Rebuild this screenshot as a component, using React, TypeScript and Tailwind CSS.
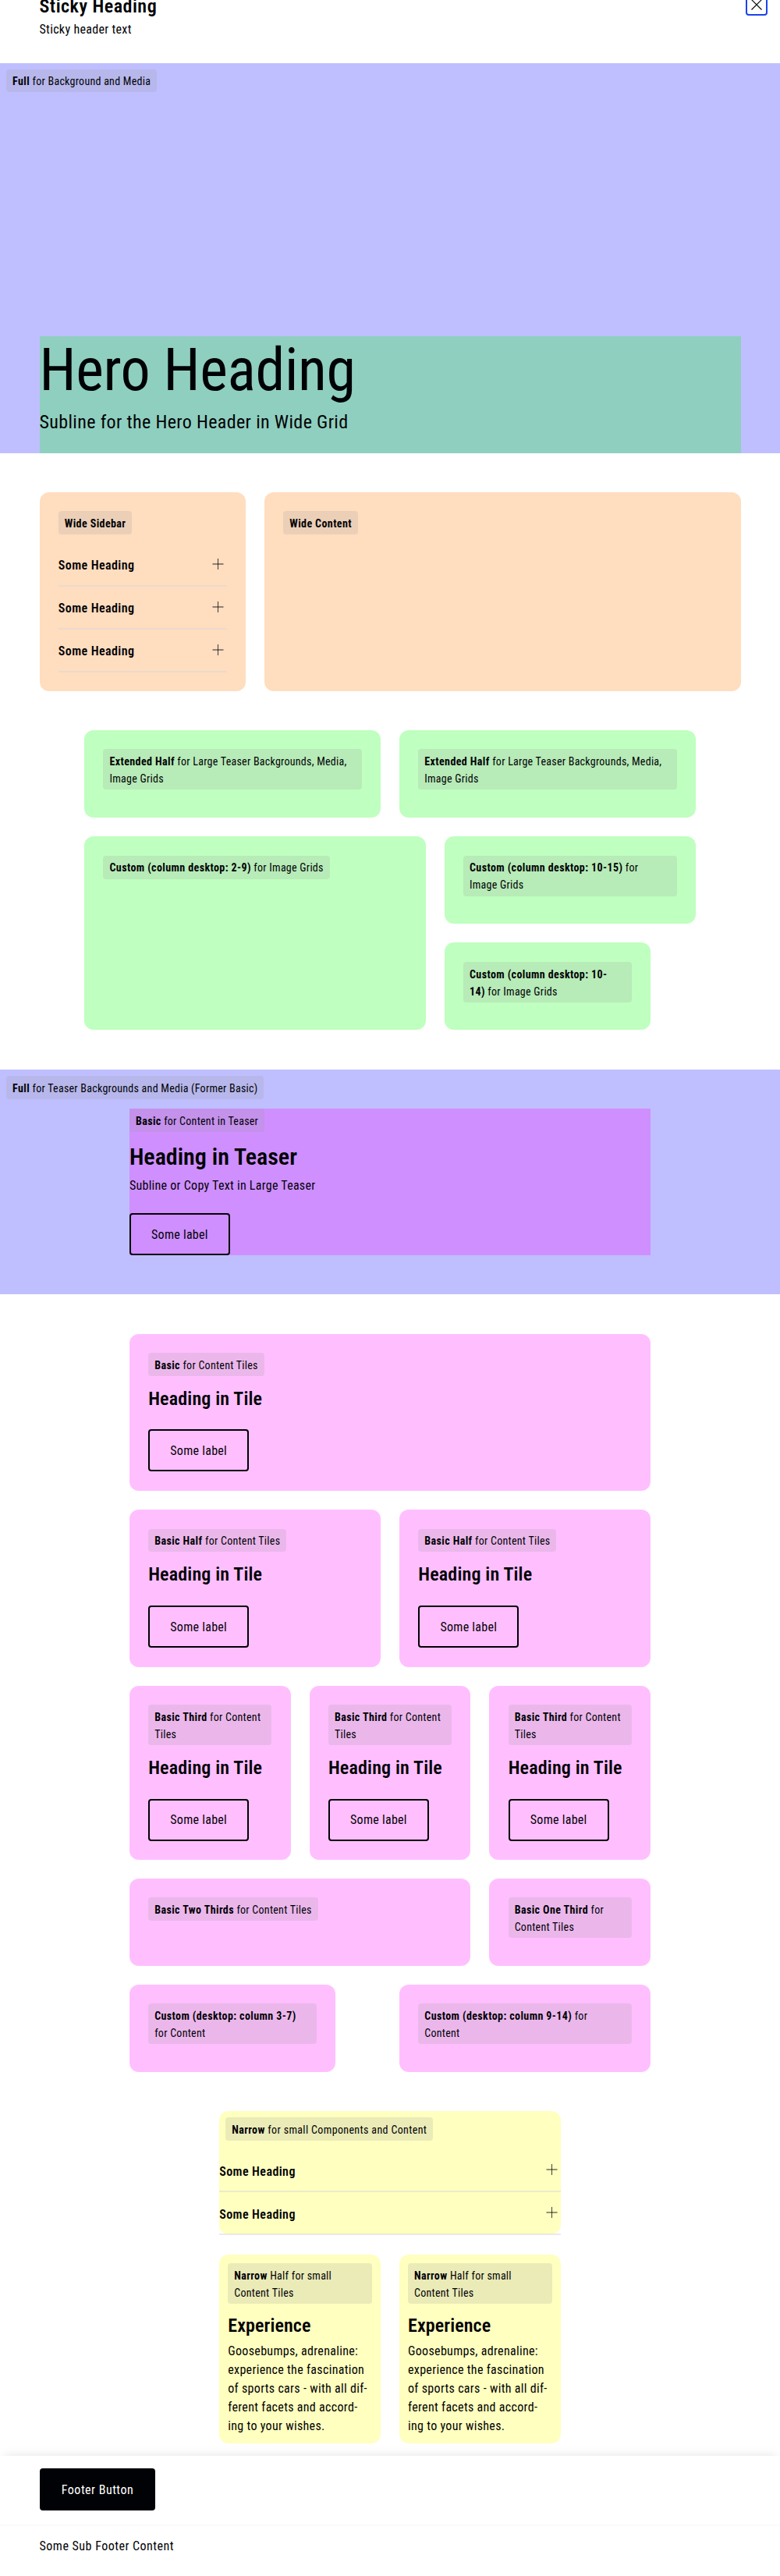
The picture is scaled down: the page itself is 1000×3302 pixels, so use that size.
import type { ReactNode } from 'react';

const GRID = 'grid grid-cols-[repeat(16,minmax(0,1fr))] gap-x-6 gap-y-[24.4px] px-[50.5px]';

function Label({ name, children, block }: { name: ReactNode; children?: ReactNode; block?: boolean }) {
  return (
    <div
      className={`${block ? 'block' : 'w-fit'} rounded-[4px] bg-[#9b9b9b]/20 px-2 pt-[4.9px] pb-[3.1px] text-sm leading-[22px] tracking-[0.26px] whitespace-nowrap`}
    >
      <b className="font-bold tracking-[0.4px]">{name}</b>
      {children}
    </div>
  );
}

function Button({ children }: { children: ReactNode }) {
  return (
    <button className="flex h-[53.7px] w-[129px] items-center justify-center rounded-[4px] border-2 border-[#010205] pt-[1.5px] text-base leading-6 tracking-[0.28px]">
      {children}
    </button>
  );
}

function AccordionItem() {
  return (
    <div className="flex h-[55px] items-start justify-between border-b-2 border-[#d8d8db]/50">
      <h3 className="mt-[16.3px] text-base leading-6 font-semibold tracking-[0.42px]">Some Heading</h3>
      <svg className="mt-3.5 size-6" viewBox="0 0 24 24" fill="none" stroke="#010205">
        <path d="M12.5 5v14" strokeOpacity="0.75" />
        <path d="M5.5 12h14" strokeOpacity="0.85" />
      </svg>
    </div>
  );
}

function Tile({ className, children }: { className: string; children: ReactNode }) {
  return <div className={`rounded-xl p-[24.3px] ${className}`}>{children}</div>;
}

function ContentTile({ className, label }: { className: string; label: ReactNode }) {
  return (
    <Tile className={`bg-[#ffbfff] ${className}`}>
      {label}
      <h2 className="mt-[10.9px] mb-[21.8px] text-2xl leading-9 font-semibold tracking-[0.17px] whitespace-nowrap">
        Heading in Tile
      </h2>
      <Button>Some label</Button>
    </Tile>
  );
}

function ExperienceTile({ className }: { className: string }) {
  return (
    <div className={`h-[242.5px] rounded-xl bg-[#ffffbf] p-[11px] ${className}`}>
      <Label name="Narrow" block>
        {' '}Half for small
        <br />
        Content Tiles
      </Label>
      <h2 className="mt-[10px] text-2xl leading-9 font-semibold tracking-[0.1px]">Experience</h2>
      <p className="mt-[3.5px] text-base leading-6 tracking-[0.32px] whitespace-nowrap">
        Goosebumps, adrenaline:
        <br />
        experience the fascination
        <br />
        of sports cars - with all dif-
        <br />
        ferent facets and accord-
        <br />
        ing to your wishes.
      </p>
    </div>
  );
}

export default function App() {
  return (
    <div className="h-[3302px] w-full overflow-hidden bg-white font-['Roboto','Liberation_Sans',sans-serif] text-[#010205] [font-stretch:75%]">
      <header className="flex h-[80.5px] items-start justify-between pr-4 pl-[50.5px]">
        <div className="-mt-[9px]">
          <h1 className="text-2xl leading-[35px] font-semibold tracking-[0.5px]">Sticky Heading</h1>
          <p className="text-base leading-6 tracking-[0.32px]">Sticky header text</p>
        </div>
        <button className="-mt-2 flex size-7 items-center justify-center rounded-[4px] border-2 border-[#1a44ea]">
          <svg className="size-6 shrink-0" viewBox="0 0 24 24" fill="none" stroke="#010205" strokeWidth="1.1">
            <path d="M5.5 5.5l13 13M18.5 5.5l-13 13" />
          </svg>
        </button>
      </header>

      <section className="flex h-[500px] flex-col justify-between bg-[#bfbfff]">
        <div className="p-2">
          <Label name="Full"> for Background and Media</Label>
        </div>
        <div className="mx-[50.5px] h-[149.5px] bg-[#8fcfbf]">
          <h2 className="text-[76px] leading-[87px] tracking-[-0.35px]">Hero Heading</h2>
          <p className="mt-[4.5px] text-2xl leading-9 tracking-[0.36px]">Subline for the Hero Header in Wide Grid</p>
        </div>
      </section>

      <section className={`${GRID} mt-[50.5px]`}>
        <Tile className="col-span-5 h-[254.8px] bg-[#ffddbf]">
          <Label name="Wide Sidebar" />
          <div className="mt-[11.7px]">
            <AccordionItem />
            <AccordionItem />
            <AccordionItem />
          </div>
        </Tile>
        <Tile className="col-span-11 bg-[#ffddbf]">
          <Label name="Wide Content" />
        </Tile>
      </section>

      <section className={`${GRID} mt-[50.4px] auto-rows-[111.7px]`}>
        <Tile className="col-start-2 col-end-9 bg-[#bfffbf]">
          <Label name="Extended Half" block>
            {' '}for Large Teaser Backgrounds, Media,
            <br />
            Image Grids
          </Label>
        </Tile>
        <Tile className="col-start-9 col-end-16 bg-[#bfffbf]">
          <Label name="Extended Half" block>
            {' '}for Large Teaser Backgrounds, Media,
            <br />
            Image Grids
          </Label>
        </Tile>
        <Tile className="col-start-2 col-end-10 row-span-2 bg-[#bfffbf]">
          <Label name="Custom (column desktop: 2-9)"> for Image Grids</Label>
        </Tile>
        <Tile className="col-start-10 col-end-16 bg-[#bfffbf]">
          <Label name="Custom (column desktop: 10-15)" block>
            {' '}for
            <br />
            Image Grids
          </Label>
        </Tile>
        <Tile className="col-start-10 col-end-15 bg-[#bfffbf]">
          <Label
            name={
              <>
                Custom (column desktop: 10-
                <br />
                14)
              </>
            }
            block
          >
            {' '}for Image Grids
          </Label>
        </Tile>
      </section>

      <section className="mt-[50.7px] h-[288.3px] bg-[#bfbfff]">
        <div className="h-[50.3px] p-2">
          <Label name="Full"> for Teaser Backgrounds and Media (Former Basic)</Label>
        </div>
        <div className={GRID}>
          <div className="col-start-3 col-end-15 h-[187.7px] bg-[#cf8fff]">
            <Label name="Basic"> for Content in Teaser</Label>
            <h2 className="mt-[9.5px] text-[30px] leading-[44px] font-semibold">Heading in Teaser</h2>
            <p className="mt-[3px] mb-[23.5px] text-base leading-6 tracking-[0.28px]">
              Subline or Copy Text in Large Teaser
            </p>
            <Button>Some label</Button>
          </div>
        </div>
      </section>

      <section className={`${GRID} mt-[50.5px]`}>
        <ContentTile
          className="col-start-3 col-end-15 h-[201.3px]"
          label={<Label name="Basic"> for Content Tiles</Label>}
        />
        <ContentTile
          className="col-start-3 col-end-9 h-[201.3px]"
          label={<Label name="Basic Half"> for Content Tiles</Label>}
        />
        <ContentTile
          className="col-start-9 col-end-15 h-[201.3px]"
          label={<Label name="Basic Half"> for Content Tiles</Label>}
        />
        {['col-start-3 col-end-7', 'col-start-7 col-end-11', 'col-start-11 col-end-15'].map((columns) => (
          <ContentTile
            key={columns}
            className={`${columns} h-[222.8px]`}
            label={
              <Label name="Basic Third" block>
                {' '}for Content
                <br />
                Tiles
              </Label>
            }
          />
        ))}
        <Tile className="col-start-3 col-end-11 h-[111.7px] bg-[#ffbfff]">
          <Label name="Basic Two Thirds"> for Content Tiles</Label>
        </Tile>
        <Tile className="col-start-11 col-end-15 h-[111.7px] bg-[#ffbfff]">
          <Label name="Basic One Third" block>
            {' '}for
            <br />
            Content Tiles
          </Label>
        </Tile>
        <Tile className="col-start-3 col-end-8 h-[111.7px] bg-[#ffbfff]">
          <Label name="Custom (desktop: column 3-7)" block>
            <br />
            for Content
          </Label>
        </Tile>
        <Tile className="col-start-9 col-end-15 h-[111.7px] bg-[#ffbfff]">
          <Label name="Custom (desktop: column 9-14)" block>
            {' '}for
            <br />
            Content
          </Label>
        </Tile>
      </section>

      <section className={`${GRID} mt-[50.6px]`}>
        <div className="col-start-5 col-end-13 h-[158px] rounded-xl bg-[#ffffbf]">
          <div className="h-[49px] p-2">
            <Label name="Narrow">
              <span className="tracking-[0.36px]"> for small Components and Content</span>
            </Label>
          </div>
          <AccordionItem />
          <AccordionItem />
        </div>
        <ExperienceTile className="col-start-5 col-end-9 mt-px" />
        <ExperienceTile className="col-start-9 col-end-13 mt-px" />
      </section>

      <footer className="relative mt-4 h-[87.5px] bg-white px-[51px] pt-4 shadow-[0_-6px_12px_-5px_rgba(0,0,0,0.1)]">
        <button className="flex h-[53.7px] w-[148px] items-center justify-center rounded-[4px] bg-[#010205] pt-[1.8px] text-base leading-6 tracking-[0.5px] text-white">
          Footer Button
        </button>
      </footer>
      <div className="px-[50.5px] pt-[16.3px] shadow-[inset_0_4px_4px_-4px_rgba(0,0,0,0.05)]">
        <p className="text-base leading-6 tracking-[0.5px]">Some Sub Footer Content</p>
      </div>
    </div>
  );
}
